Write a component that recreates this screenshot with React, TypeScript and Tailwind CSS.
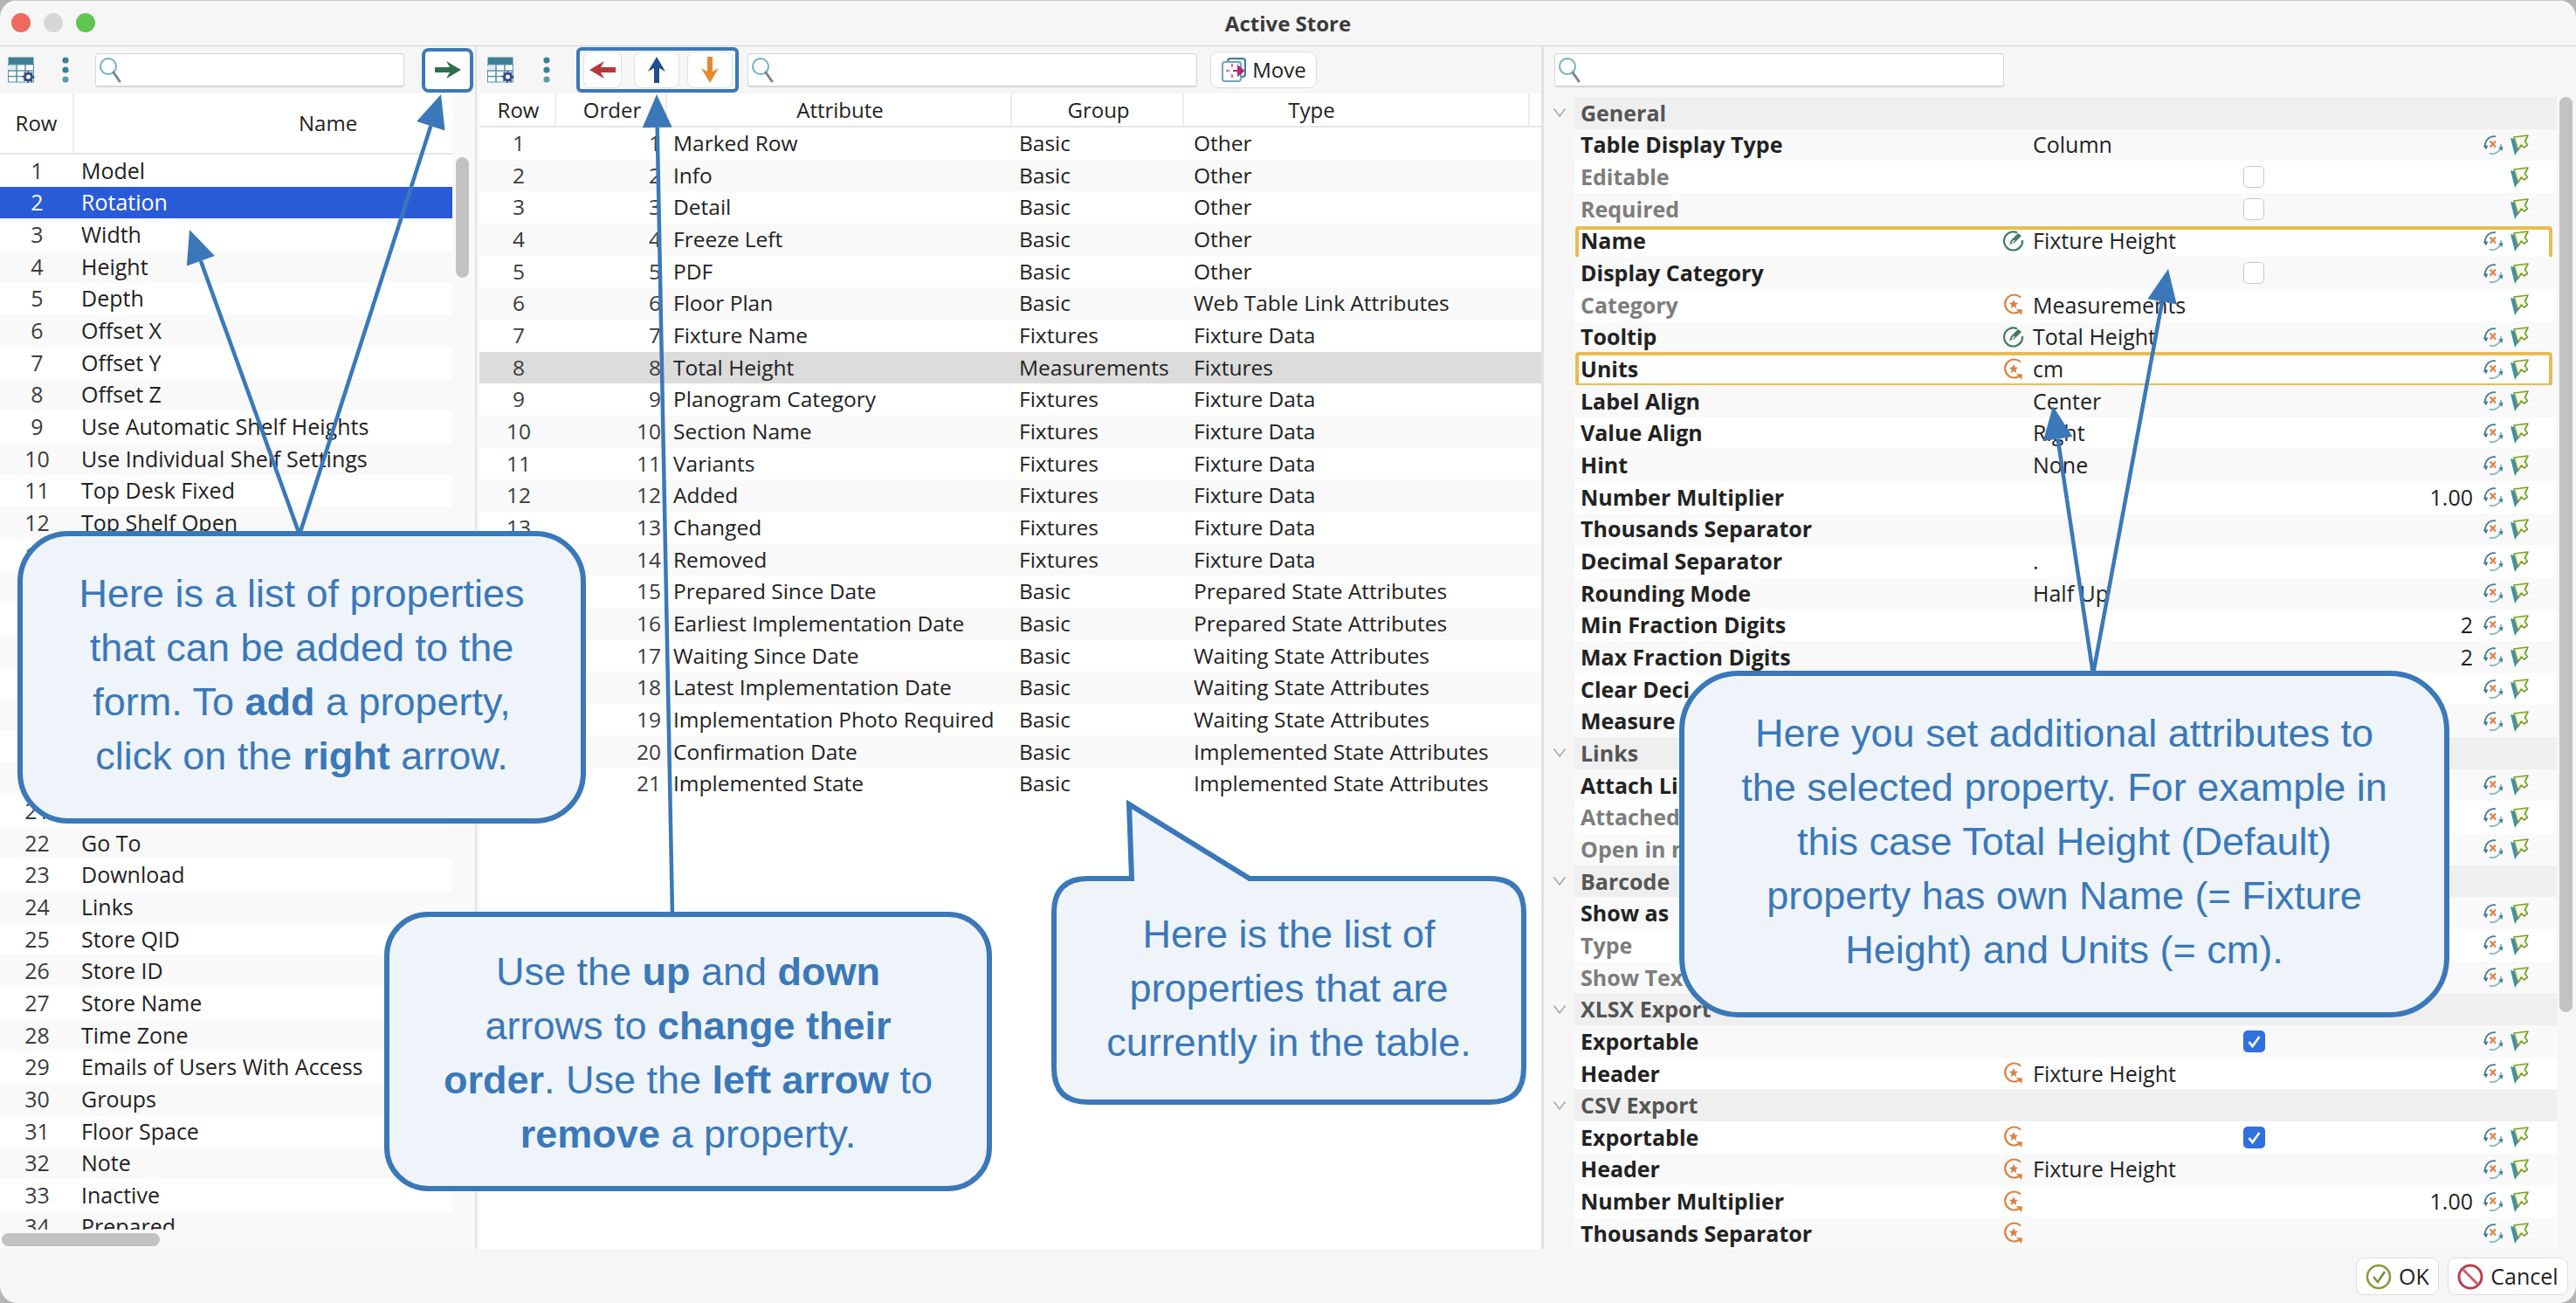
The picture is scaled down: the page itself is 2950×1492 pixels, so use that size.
import React from "react";

const BLUE = "#3a78b9";

function TableIcon() {
  return (
    <svg width="31" height="30" viewBox="0 0 31 30" className="shrink-0">
      <rect x="0.5" y="0.5" width="29" height="9" fill="#3f7f96" />
      <rect x="0.5" y="9" width="29" height="20" fill="#fff" stroke="#5c93a6" strokeWidth="1" />
      <path d="M10 9v20M20 9v12M0.5 16h29M0.5 22.5h20" stroke="#5c93a6" strokeWidth="1.6" fill="none" />
      <rect x="0" y="10" width="9" height="5" fill="#dfeaf0" />
      <circle cx="23.5" cy="23" r="6.5" fill="#fff" />
      <circle cx="23.5" cy="23" r="4" fill="none" stroke="#2d4d88" strokeWidth="3" />
      <circle cx="23.5" cy="23" r="6" fill="none" stroke="#2d4d88" strokeWidth="1.6" strokeDasharray="2.2 2.2" />
    </svg>
  );
}

function Dots() {
  return (
    <svg width="10" height="32" viewBox="0 0 10 32" className="shrink-0">
      <circle cx="5" cy="5" r="3.6" fill="#3b7f97" />
      <circle cx="5" cy="16" r="3.6" fill="#3b7f97" />
      <circle cx="5" cy="27" r="3.6" fill="#5b9aac" />
    </svg>
  );
}

function SearchIcon() {
  return (
    <svg width="32" height="32" viewBox="0 0 32 32" className="shrink-0">
      <circle cx="12" cy="12" r="9" fill="none" stroke="#6fb1bf" strokeWidth="2" />
      <path d="M18 19l7 10" stroke="#79868c" strokeWidth="3" strokeLinecap="round" />
    </svg>
  );
}

function SearchBox({ className }: { className: string }) {
  return (
    <div className={"h-[39px] bg-white border border-[#d6d6d6] border-b-2 rounded-[4px] flex items-center pl-[2px] shrink-0 " + className}>
      <SearchIcon />
    </div>
  );
}

function ArrowGlyph({ dir, color }: { dir: "left" | "right" | "up" | "down"; color: string }) {
  const rot = { right: 0, down: 90, left: 180, up: 270 }[dir];
  return (
    <svg width="32" height="32" viewBox="0 0 32 32" style={{ transform: `rotate(${rot}deg)` }}>
      <path d="M1 13h17l-4-7 17 10-17 10 4-7H1z" fill={color} />
    </svg>
  );
}

function ResetIcon() {
  return (
    <svg width="24" height="26" viewBox="0 0 24 26" className="shrink-0">
      <path d="M3.5 16A10 10 0 0 1 15 3.4" fill="none" stroke="#3f7f96" strokeWidth="1.8" />
      <path d="M0.5 13.5l6 0.2-2.6 4.6z" fill="#3f7f96" />
      <path d="M21 12A10 10 0 0 1 8 22.6" fill="none" stroke="#8ab9c8" strokeWidth="1.8" />
      <path d="M18.5 15.5l5 -0.5-1.5 5z" fill="#3f7f96" />
      <path d="M8.5 8.5l6.5 7M15 8.5l-6.5 7" stroke="#e67e3a" strokeWidth="2" />
    </svg>
  );
}

function CursorIcon() {
  return (
    <svg width="24" height="26" viewBox="0 0 24 26" className="shrink-0">
      <path d="M2 5l5 20 5-8-6-11z" fill="#3f8fb0" />
      <path d="M6 4l16-2-3.5 7 3 4-4 3-3-3-4 6z" fill="#f6f9ea" stroke="#7a9f2e" strokeWidth="1.7" strokeLinejoin="round" />
    </svg>
  );
}

function GreenIcon() {
  return (
    <svg width="24" height="26" viewBox="0 0 24 26" className="shrink-0">
      <path d="M16 3.5A10.5 10.5 0 1 0 22 12" fill="none" stroke="#3f7d5d" strokeWidth="2.2" />
      <path d="M7 17l2-5 8-8 4 3-8 8z" fill="#3f7d5d" />
      <path d="M10 15l3-3" stroke="#fff" strokeWidth="1.4" />
    </svg>
  );
}

function OrangeIcon() {
  return (
    <svg width="24" height="28" viewBox="0 0 24 28" className="shrink-0">
      <path d="M20 5.5A10.5 10.5 0 1 0 18 22" fill="none" stroke="#dd7f3c" strokeWidth="2.2" />
      <path d="M15 19l7 .5-1 6.5z" fill="#dd7f3c" />
      <path d="M12 8l1.5 3.6 3.7.3-2.8 2.4.9 3.7-3.3-2-3.3 2 .9-3.7-2.8-2.4 3.7-.3z" fill="#dd7f3c" />
    </svg>
  );
}

function Checkbox({ checked }: { checked?: boolean }) {
  if (checked) {
    return (
      <span className="flex w-[25px] h-[25px] rounded-[5px] bg-[#2f6fe0] items-center justify-center">
        <svg width="17" height="17" viewBox="0 0 17 17">
          <path d="M2.5 9l4 5 8-11" fill="none" stroke="#fff" strokeWidth="2.6" />
        </svg>
      </span>
    );
  }
  return <span className="block w-[24px] h-[25px] rounded-[5px] bg-white border border-[#c8c8c8]" />;
}

type RightRow = {
  label: string;
  group?: boolean;
  dim?: boolean;
  icon?: "green" | "orange";
  value?: string;
  right?: boolean;
  check?: "on" | "off";
  noReset?: boolean;
  box?: string;
};

const rightRows: RightRow[] = [
  { label: "General", group: true },
  { label: "Table Display Type", value: "Column" },
  { label: "Editable", dim: true, check: "off", noReset: true },
  { label: "Required", dim: true, check: "off", noReset: true },
  { label: "Name", icon: "green", value: "Fixture Height", box: "top-[1px] -bottom-[4px]" },
  { label: "Display Category", check: "off" },
  { label: "Category", dim: true, icon: "orange", value: "Measurements", noReset: true },
  { label: "Tooltip", icon: "green", value: "Total Height" },
  { label: "Units", icon: "orange", value: "cm", box: "-top-[1px] -bottom-[2px]" },
  { label: "Label Align", value: "Center" },
  { label: "Value Align", value: "Right" },
  { label: "Hint", value: "None" },
  { label: "Number Multiplier", value: "1.00", right: true },
  { label: "Thousands Separator" },
  { label: "Decimal Separator", value: "." },
  { label: "Rounding Mode", value: "Half Up" },
  { label: "Min Fraction Digits", value: "2", right: true },
  { label: "Max Fraction Digits", value: "2", right: true },
  { label: "Clear Deci" },
  { label: "Measure" },
  { label: "Links", group: true },
  { label: "Attach Li" },
  { label: "Attached", dim: true },
  { label: "Open in n", dim: true },
  { label: "Barcode", group: true },
  { label: "Show as" },
  { label: "Type", dim: true },
  { label: "Show Tex", dim: true },
  { label: "XLSX Export", group: true },
  { label: "Exportable", check: "on" },
  { label: "Header", icon: "orange", value: "Fixture Height" },
  { label: "CSV Export", group: true },
  { label: "Exportable", icon: "orange", check: "on" },
  { label: "Header", icon: "orange", value: "Fixture Height" },
  { label: "Number Multiplier", icon: "orange", value: "1.00", right: true },
  { label: "Thousands Separator", icon: "orange" },
];

const leftNames = [
  "Model", "Rotation", "Width", "Height", "Depth", "Offset X", "Offset Y", "Offset Z",
  "Use Automatic Shelf Heights", "Use Individual Shelf Settings", "Top Desk Fixed", "Top Shelf Open",
  "", "", "", "", "", "", "", "", "",
  "Go To", "Download", "Links", "Store QID", "Store ID", "Store Name", "Time Zone",
  "Emails of Users With Access", "Groups", "Floor Space", "Note", "Inactive", "Prepared",
];

const midRows: [string, string, string][] = [
  ["Marked Row", "Basic", "Other"],
  ["Info", "Basic", "Other"],
  ["Detail", "Basic", "Other"],
  ["Freeze Left", "Basic", "Other"],
  ["PDF", "Basic", "Other"],
  ["Floor Plan", "Basic", "Web Table Link Attributes"],
  ["Fixture Name", "Fixtures", "Fixture Data"],
  ["Total Height", "Measurements", "Fixtures"],
  ["Planogram Category", "Fixtures", "Fixture Data"],
  ["Section Name", "Fixtures", "Fixture Data"],
  ["Variants", "Fixtures", "Fixture Data"],
  ["Added", "Fixtures", "Fixture Data"],
  ["Changed", "Fixtures", "Fixture Data"],
  ["Removed", "Fixtures", "Fixture Data"],
  ["Prepared Since Date", "Basic", "Prepared State Attributes"],
  ["Earliest Implementation Date", "Basic", "Prepared State Attributes"],
  ["Waiting Since Date", "Basic", "Waiting State Attributes"],
  ["Latest Implementation Date", "Basic", "Waiting State Attributes"],
  ["Implementation Photo Required", "Basic", "Waiting State Attributes"],
  ["Confirmation Date", "Basic", "Implemented State Attributes"],
  ["Implemented State", "Basic", "Implemented State Attributes"],
];

function LeftPanel() {
  return (
    <div className="w-[546px] shrink-0 flex flex-col border-r-2 border-[#e2e2e2] text-[25px]">
      <div className="h-[54px] shrink-0 flex items-center pl-[9px]">
        <TableIcon />
        <span className="ml-[30px]"><Dots /></span>
        <SearchBox className="ml-[29px] w-[354px]" />
        <div className="ml-[20px] w-[59px] h-[51px] rounded-[8px] border-[4px] border-[#3a78b9] bg-white flex items-center justify-center">
          <ArrowGlyph dir="right" color="#2f6f4f" />
        </div>
      </div>
      <div className="flex-1 min-h-0 flex">
        <div className="w-[518px] shrink-0 overflow-hidden bg-white">
          <div className="h-[70px] flex border-b-2 border-[#e6e6e6] text-[#222] text-[24px]">
            <div className="w-[85px] border-r-2 border-[#ececec] flex items-center justify-center">Row</div>
            <div className="flex-1 flex items-center pl-[257px]">Name</div>
          </div>
          {leftNames.map((n, i) => {
            const covered = i >= 13 && i < 20;
            return (
              <div
                key={i}
                className={
                  "h-[36.67px] flex items-center " +
                  (i === 1 ? "bg-[#2a5bd7] text-white" : i % 2 ? "bg-[#f9f9f9] text-[#222]" : "bg-white text-[#222]")
                }
              >
                <div className={"w-[85px] text-center " + (i === 1 ? "" : "text-[#3c3c3c]")}>{covered ? "" : i + 1}</div>
                <div className="pl-[8px] whitespace-nowrap">{n}</div>
              </div>
            );
          })}
        </div>
        <div className="flex-1 pt-[73px] pl-[4px] bg-[#f9f9f9]">
          <div className="w-[15px] h-[138px] rounded-full bg-[#c2c2c2]" />
        </div>
      </div>
      <div className="h-[22px] shrink-0 bg-[#f9f9f9] pt-[4px] pl-[2px]">
        <div className="w-[181px] h-[15px] rounded-full bg-[#c2c2c2]" />
      </div>
    </div>
  );
}

function MiddlePanel() {
  return (
    <div className="w-[1222px] shrink-0 flex flex-col border-r-[3px] border-[#e2e2e2] text-[24.5px]">
      <div className="h-[54px] shrink-0 flex items-center pl-[12px]">
        <TableIcon />
        <span className="ml-[32px]"><Dots /></span>
        <div className="ml-[29px] w-[186px] h-[52px] rounded-[6px] border-[4px] border-[#3a78b9] flex items-center pl-[4px] bg-[#f7f7f7] shrink-0">
          <div className="w-[44px] h-[42px] rounded-[8px] bg-white border border-[#e2e2e2] flex items-center justify-center"><ArrowGlyph dir="left" color="#b8363c" /></div>
          <div className="ml-[14px] w-[52px] h-[42px] rounded-[8px] bg-white border border-[#e2e2e2] flex items-center justify-center"><ArrowGlyph dir="up" color="#1f4e8c" /></div>
          <div className="ml-[9px] w-[52px] h-[42px] rounded-[8px] bg-white border border-[#e2e2e2] flex items-center justify-center"><ArrowGlyph dir="down" color="#e58a2e" /></div>
        </div>
        <SearchBox className="ml-[10px] w-[515px]" />
        <div className="ml-[15px] w-[122px] h-[42px] rounded-[9px] bg-white border border-[#dcdcdc] flex items-center justify-center gap-[6px] text-[#222] text-[24px]">
          <svg width="30" height="30" viewBox="0 0 30 30" className="shrink-0">
            <rect x="8" y="2" width="20" height="21" rx="3" fill="#e6f0f3" stroke="#3f7f96" strokeWidth="2" />
            <rect x="2" y="6" width="21" height="22" rx="3" fill="#fff" stroke="#6fa6b8" strokeWidth="2" />
            <path d="M13 8v4M13 20v4M6 16h4" stroke="#d77ba6" strokeWidth="2.4" />
            <path d="M14 16h9M20 11l6 5-6 5z" fill="#b3286f" stroke="#b3286f" strokeWidth="2" />
          </svg>
          Move
        </div>
      </div>
      <div className="flex-1 min-h-0 overflow-hidden bg-white ml-[3px]">
        <div className="h-[39px] flex border-b-2 border-[#e6e6e6] text-[#222] text-[24px]">
          <div className="w-[88px] border-r-2 border-[#ececec] flex items-center justify-center pl-[3px]">Row</div>
          <div className="w-[127px] border-r-2 border-[#ececec] flex items-center justify-center pl-[3px]">Order</div>
          <div className="w-[395px] border-r-2 border-[#ececec] flex items-center justify-center pl-[3px]">Attribute</div>
          <div className="w-[197px] border-r-2 border-[#ececec] flex items-center justify-center pl-[3px]">Group</div>
          <div className="w-[396px] border-r-2 border-[#ececec] flex items-center justify-center pr-[102px]">Type</div>
        </div>
        {midRows.map((r, i) => (
          <div key={i} className={"h-[36.67px] flex items-center text-[#222] " + (i === 7 ? "bg-[#dcdcdc]" : i % 2 ? "bg-[#f9f9f9]" : "bg-white")}>
            <div className="w-[88px] text-center text-[#3c3c3c] pl-[2px]">{i + 1}</div>
            <div className="w-[120px] text-right text-[#3c3c3c]">{i + 1}</div>
            <div className="w-[402px] pl-[14px] whitespace-nowrap">{r[0]}</div>
            <div className="w-[197px] pl-[8px] whitespace-nowrap">{r[1]}</div>
            <div className="pl-[11px] whitespace-nowrap">{r[2]}</div>
          </div>
        ))}
      </div>
    </div>
  );
}

function RightPanel() {
  return (
    <div className="flex-1 min-w-0 flex flex-col text-[25px]">
      <div className="h-[54px] shrink-0 flex items-center pl-[12px]">
        <SearchBox className="w-[515px]" />
      </div>
      <div className="flex-1 min-h-0 flex pt-[4px]">
        <div className="w-[35px] shrink-0">
          {rightRows.map((r, i) => (
            <div key={i} className="h-[36.67px] flex items-center justify-end pr-[9px]">
              {r.group && (
                <svg width="16" height="12" viewBox="0 0 16 12">
                  <path d="M1.5 1.5L8 10l6.5-8.5" fill="none" stroke="#a6a6a6" strokeWidth="1.5" />
                </svg>
              )}
            </div>
          ))}
        </div>
        <div className="w-[1125px] shrink-0 overflow-hidden">
          {rightRows.map((r, i) => {
            if (r.group) {
              return (
                <div key={i} className="h-[36.67px] flex items-center bg-[#efefef] pl-[7px] font-bold text-[#555]">
                  {r.label}
                </div>
              );
            }
            return (
              <div key={i} className={"relative h-[36.67px] flex items-center pl-[7px] " + (i % 2 ? "bg-[#f9f9f9]" : "bg-white")}>
                <div className={"w-[481px] shrink-0 font-bold whitespace-nowrap " + (r.dim ? "text-[#7d7d7d]" : "text-[#222]")}>{r.label}</div>
                <div className="w-[37px] shrink-0 flex items-center pl-[3px]">
                  {r.icon === "green" && <GreenIcon />}
                  {r.icon === "orange" && <OrangeIcon />}
                </div>
                <div className={"w-[504px] shrink-0 whitespace-nowrap text-[#222] " + (r.right ? "text-right" : "")}>
                  {r.value}
                  {r.check && (
                    <div className="ml-[241px]"><Checkbox checked={r.check === "on"} /></div>
                  )}
                </div>
                <div className="ml-[11px] w-[24px] shrink-0">{!r.noReset && <ResetIcon />}</div>
                <div className="ml-[6px] w-[24px] shrink-0"><CursorIcon /></div>
                {r.box && <div className={"absolute left-[1px] right-[5px] border-[4px] border-[#e9bb52] rounded-[4px] " + r.box} />}
              </div>
            );
          })}
        </div>
        <div className="flex-1 pl-[3px]">
          <div className="w-[15px] h-[1048px] rounded-full bg-[#c2c2c2]" />
        </div>
      </div>
    </div>
  );
}

function Arrow({ x1, y1, x2, y2 }: { x1: number; y1: number; x2: number; y2: number }) {
  const len = Math.hypot(x2 - x1, y2 - y1);
  const ux = (x2 - x1) / len;
  const uy = (y2 - y1) / len;
  const hl = 38;
  const hw = 17;
  const bx = x2 - ux * hl;
  const by = y2 - uy * hl;
  const pts = `${x2},${y2} ${bx - uy * hw},${by + ux * hw} ${bx + uy * hw},${by - ux * hw}`;
  return (
    <g>
      <line x1={x1} y1={y1} x2={bx} y2={by} stroke={BLUE} strokeWidth="4.5" />
      <polygon points={pts} fill={BLUE} />
    </g>
  );
}

function Callouts() {
  const cardBase =
    "absolute bg-[#eff4fa] border-[6px] border-[#3a78b9] text-[#3a78b9] flex items-center justify-center text-center text-[45px] leading-[62px] font-['Liberation_Sans',Arial,sans-serif]";
  return (
    <>
      <svg className="absolute left-0 top-0 pointer-events-none" width="2950" height="1492" viewBox="0 0 2950 1492">
        <Arrow x1={343} y1={612} x2={217} y2={263} />
        <Arrow x1={343} y1={612} x2={505} y2={108} />
        <Arrow x1={770} y1={1048} x2={752} y2={108} />
        <Arrow x1={2397} y1={772} x2={2351} y2={465} />
        <Arrow x1={2397} y1={772} x2={2483} y2={308} />
        <path
          d="M1296 1006 L1293 921 L1431 1006 H1706 Q1745 1006 1745 1045 V1223 Q1745 1262 1706 1262 H1246 Q1207 1262 1207 1223 V1045 Q1207 1006 1246 1006 Z"
          fill="#eff4fa"
          stroke={BLUE}
          strokeWidth="6"
        />
      </svg>
      <div className={cardBase + " left-[20px] top-[608px] w-[651px] h-[335px] rounded-[58px] pb-[6px]"}>
        <div>
          Here is a list of properties<br />
          that can be added to the<br />
          form. To <b>add</b> a property,<br />
          click on the <b>right</b> arrow.
        </div>
      </div>
      <div className={cardBase + " left-[440px] top-[1044px] w-[696px] h-[320px] rounded-[50px] pt-[4px]"}>
        <div>
          Use the <b>up</b> and <b>down</b><br />
          arrows to <b>change their</b><br />
          <b>order</b>. Use the <b>left arrow</b> to<br />
          <b>remove</b> a property.
        </div>
      </div>
      <div className="absolute left-[1204px] top-[1039px] w-[544px] text-[#3a78b9] text-center text-[45px] leading-[62px] font-['Liberation_Sans',Arial,sans-serif]">
        Here is the list of<br />
        properties that are<br />
        currently in the table.
      </div>
      <div className={cardBase + " left-[1923px] top-[768px] w-[882px] h-[397px] rounded-[68px] pb-[6px]"}>
        <div>
          Here you set additional attributes to<br />
          the selected property. For example in<br />
          this case Total Height (Default)<br />
          property has own Name (= Fixture<br />
          Height) and Units (= cm).
        </div>
      </div>
    </>
  );
}

export default function App() {
  return (
    <div className="relative w-[2950px] h-[1492px] overflow-hidden bg-[#b5b5b5]">
      <div className="w-full h-full rounded-[20px] overflow-hidden bg-[#f6f6f6] flex flex-col font-['Open_Sans','Noto_Sans',sans-serif] text-[24px] leading-none">
        <div className="h-[53px] shrink-0 relative flex items-center justify-center border-b border-[#d4d4d4] border-t border-t-[#c9c9c9] font-bold text-[24px] text-[#3a3a3a]">
          <div className="absolute left-[13px] top-[14px] flex gap-[15px]">
            <span className="block w-[22px] h-[22px] rounded-full bg-[#ee6a5f]" />
            <span className="block w-[22px] h-[22px] rounded-full bg-[#d6d6d6]" />
            <span className="block w-[22px] h-[22px] rounded-full bg-[#61c554]" />
          </div>
          Active Store
        </div>
        <div className="flex-1 min-h-0 flex">
          <LeftPanel />
          <MiddlePanel />
          <RightPanel />
        </div>
        <div className="h-[62px] shrink-0 flex items-start justify-end pt-[10px] pr-[9px] gap-[10px] text-[#222] text-[25px]">
          <div className="w-[95px] h-[43px] bg-white border border-[#dcdcdc] rounded-[9px] flex items-center justify-center gap-[8px]">
            <svg width="30" height="30" viewBox="0 0 30 30">
              <circle cx="15" cy="15" r="13" fill="#fff" stroke="#8a9a3c" strokeWidth="2.6" />
              <path d="M9 15l5 6 8-12" fill="none" stroke="#6f8f3a" strokeWidth="2.4" />
            </svg>
            OK
          </div>
          <div className="w-[138px] h-[43px] bg-white border border-[#dcdcdc] rounded-[9px] flex items-center justify-center gap-[8px]">
            <svg width="30" height="30" viewBox="0 0 30 30">
              <circle cx="15" cy="15" r="13" fill="#fff" stroke="#b8404f" strokeWidth="3" />
              <path d="M6 6l18 18" stroke="#c9606c" strokeWidth="3" />
            </svg>
            Cancel
          </div>
        </div>
      </div>
      <Callouts />
    </div>
  );
}
